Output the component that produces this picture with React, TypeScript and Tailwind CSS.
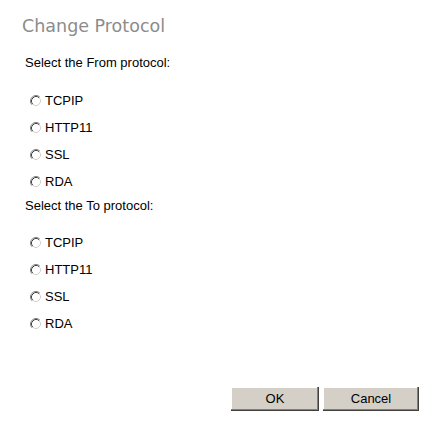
import React from "react";

function Radio() {
  return (
    <svg width="12" height="12" viewBox="0 0 12 12" className="shrink-0">
      <circle cx="6" cy="6" r="4.5" fill="#ffffff" />
      <path d="M2.11 9.89 A5.5 5.5 0 0 1 9.89 2.11" fill="none" stroke="#808080" strokeWidth="1" />
      <path d="M9.89 2.11 A5.5 5.5 0 0 1 2.11 9.89" fill="none" stroke="#ffffff" strokeWidth="1" />
      <path d="M2.82 9.18 A4.5 4.5 0 0 1 9.18 2.82" fill="none" stroke="#404040" strokeWidth="1" />
      <path d="M9.18 2.82 A4.5 4.5 0 0 1 2.82 9.18" fill="none" stroke="#d4d0c8" strokeWidth="1" />
    </svg>
  );
}

const options = ["TCPIP", "HTTP11", "SSL", "RDA"];

function Group() {
  return (
    <div className="flex flex-col">
      {options.map((o) => (
        <label key={o} className="flex items-center h-[27px] ml-[8px] gap-[3px] text-[13px] leading-[27px] text-black">
          <Radio />
          <span>{o}</span>
        </label>
      ))}
    </div>
  );
}

export default function App() {
  return (
    <div className="w-[447px] h-[431px] bg-white flex flex-col pt-[16px] pl-[22px] font-['Liberation_Sans',Arial,sans-serif]">
      <div className="text-[17.5px] leading-[20px] text-[#8c8c8c] font-['DejaVu_Sans',Verdana,sans-serif]">
        Change Protocol
      </div>
      <div className="mt-[19px] ml-[3px] text-[13px] leading-[15px] text-black">Select the From protocol:</div>
      <div className="mt-[17px]">
        <Group />
      </div>
      <div className="mt-[3px] ml-[3px] text-[13px] leading-[15px] text-black">Select the To protocol:</div>
      <div className="mt-[16px]">
        <Group />
      </div>
      <div className="mt-[50px] flex justify-end gap-[4px] pr-[28px]">
        <button className="w-[88px] h-[24px] bg-[#d4d0c8] text-[13px] leading-[24px] text-black shadow-[inset_-1px_-1px_#404040,inset_-2px_-2px_#808080,inset_1px_1px_#ffffff]">
          OK
        </button>
        <button className="w-[96px] h-[24px] bg-[#d4d0c8] text-[13px] leading-[24px] text-black shadow-[inset_-1px_-1px_#404040,inset_-2px_-2px_#808080,inset_1px_1px_#ffffff]">
          Cancel
        </button>
      </div>
    </div>
  );
}
